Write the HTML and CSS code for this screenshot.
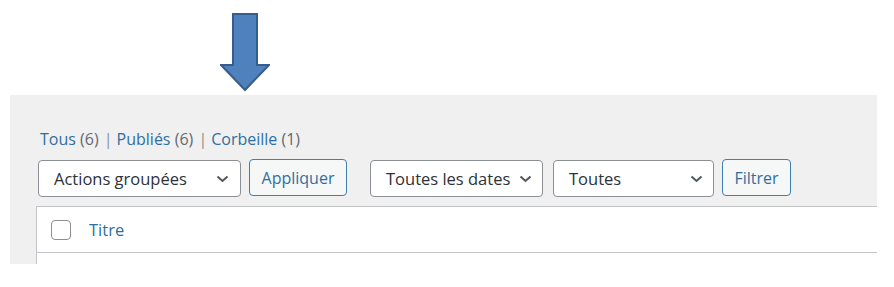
FILE: index.html
```html
<!DOCTYPE html>
<html lang="fr">
<head>
    <meta charset="UTF-8">
    <meta name="viewport" content="width=device-width, initial-scale=1.0">
    <title>Articles</title>
    <link rel="stylesheet" href="styles.css">
</head>
<body>
    <div class="pointer">
        <svg class="arrow" width="50" height="79" viewBox="0 0 50 79">
            <polygon points="13,1 37,1 37,52 49,52 25,77 1,52 13,52" fill="#4f81bd" stroke="#385d8a" stroke-width="2"/>
        </svg>
    </div>

    <div class="panel">
        <ul class="subsubsub">
            <li><a href="#">Tous <span class="count">(6)</span></a> <span class="sep">|</span></li>
            <li><a href="#">Publiés <span class="count">(6)</span></a> <span class="sep">|</span></li>
            <li><a href="#">Corbeille <span class="count">(1)</span></a></li>
        </ul>

        <div class="tablenav">
            <div class="actions">
                <div class="select select-bulk">
                    <span>Actions groupées</span>
                    <svg class="chevron" width="13" height="8" viewBox="0 0 13 8"><polyline points="1.5,1.5 6.5,6 11.5,1.5" fill="none" stroke="#50575e" stroke-width="2"/></svg>
                </div>
                <button class="button button-apply">Appliquer</button>
            </div>
            <div class="actions">
                <div class="select select-dates">
                    <span>Toutes les dates</span>
                    <svg class="chevron" width="13" height="8" viewBox="0 0 13 8"><polyline points="1.5,1.5 6.5,6 11.5,1.5" fill="none" stroke="#50575e" stroke-width="2"/></svg>
                </div>
                <div class="select select-cat">
                    <span>Toutes</span>
                    <svg class="chevron" width="13" height="8" viewBox="0 0 13 8"><polyline points="1.5,1.5 6.5,6 11.5,1.5" fill="none" stroke="#50575e" stroke-width="2"/></svg>
                </div>
                <button class="button button-filter">Filtrer</button>
            </div>
        </div>

        <div class="list-table">
            <div class="table-head">
                <span class="checkbox"></span>
                <a href="#" class="col-title">Titre</a>
            </div>
            <div class="table-row"></div>
        </div>
    </div>
</body>
</html>
```

FILE: styles.css
```css
body {
    margin: 0;
    padding: 0;
    font-family: "Open Sans", "Noto Sans", sans-serif;
    background-color: #fff;
    color: #3c434a;
}
a {
    color: #2f6f9f;
    text-decoration: none;
}

/* arrow above the screen capture */
.pointer {
    height: 95px;
}
.arrow {
    display: block;
    margin-left: 220px;
    padding-top: 13px;
}

/* admin screen */
.panel {
    margin-left: 10px;
    width: 867px;
    height: 169px;
    background-color: #f0f0f1;
    padding-left: 26px;
    box-sizing: border-box;
    overflow: hidden;
}
.subsubsub {
    list-style: none;
    margin: 0;
    padding: 33px 0 0 4px;
    display: flex;
    font-size: 16px;
    line-height: 22px;
}
.subsubsub li {
    margin-right: 4px;
}
.subsubsub .count {
    color: #646970;
}
.subsubsub .sep {
    color: #8c8f94;
    margin-left: 1px;
}

.tablenav {
    display: flex;
    margin-top: 10px;
    padding-left: 2px;
}
.actions {
    display: flex;
    gap: 8px;
    margin-right: 23px;
}
.actions + .actions {
    gap: 0;
}
.select {
    height: 37px;
    box-sizing: border-box;
    border: 1px solid #8c8f94;
    border-radius: 4px;
    background-color: #fff;
    display: flex;
    align-items: center;
    justify-content: space-between;
    padding: 0 10px 0 15px;
    font-size: 16.5px;
    color: #2c3338;
}
.select-bulk {
    width: 203px;
}
.select-bulk .chevron {
    margin-right: 1px;
}
.select-dates {
    width: 173px;
    margin-right: 10px;
}
.select-cat {
    width: 161px;
    margin-right: 8px;
}
.button {
    height: 37px;
    box-sizing: border-box;
    border: 1px solid #3f7fae;
    border-radius: 4px;
    background-color: #f6f7f7;
    color: #2f6f9f;
    font-family: inherit;
    font-size: 16px;
    padding: 0;
    margin-top: -1px;
}
.button-apply {
    width: 98px;
}
.button-filter {
    width: 69px;
}

.list-table {
    margin-top: 9px;
    background-color: #fff;
    border-left: 1px solid #c3c4c7;
    border-top: 1px solid #c3c4c7;
}
.table-head {
    height: 45px;
    border-bottom: 1px solid #c3c4c7;
    display: flex;
    align-items: center;
    padding-left: 14px;
}
.checkbox {
    width: 20px;
    height: 20px;
    box-sizing: border-box;
    border: 1px solid #8c8f94;
    border-radius: 4px;
    background-color: #fff;
    margin-right: 18px;
}
.col-title {
    font-size: 16.5px;
}
.table-row {
    height: 20px;
}
```
